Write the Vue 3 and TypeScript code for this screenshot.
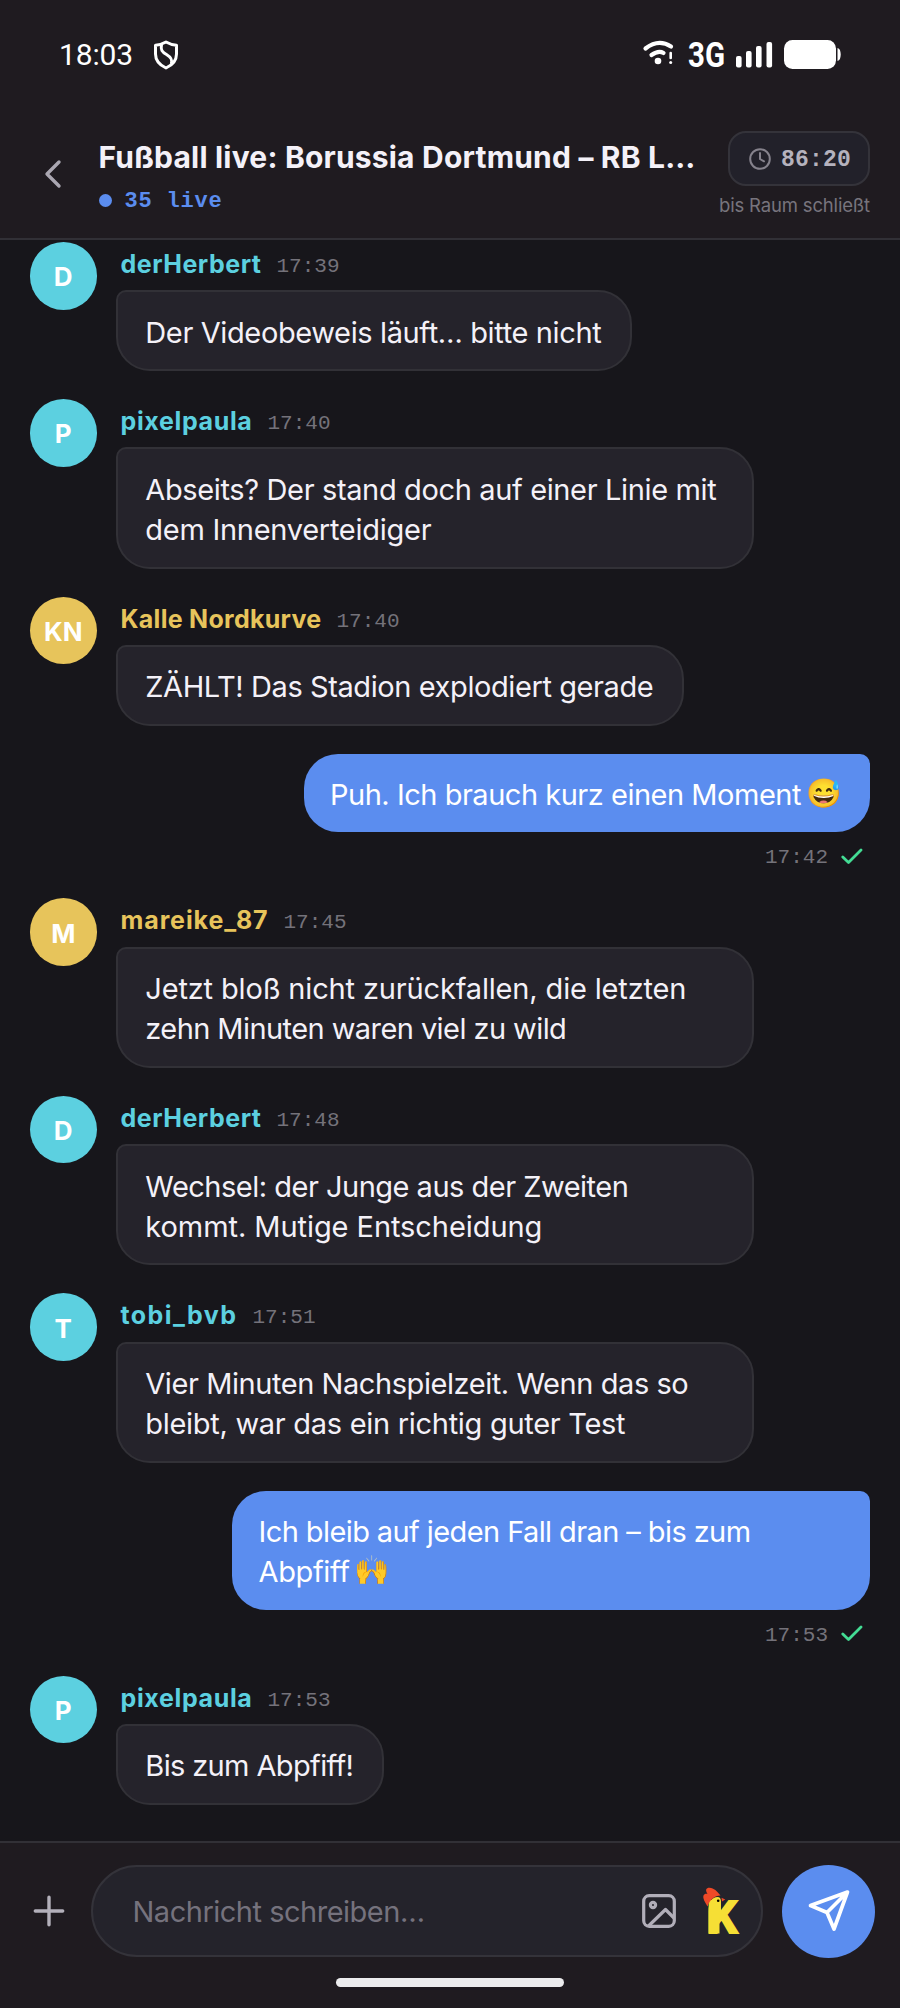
<script setup lang="ts">
import { onMounted, ref } from 'vue'

interface Line {
  text: string
  width: number
  emoji?: 'sweat' | 'hands'
}

interface Message {
  id: number
  own?: boolean
  name?: string
  nameWidth?: number
  initials?: string
  tone?: 'cyan' | 'gold'
  time: string
  lines: Line[]
}

const messages: Message[] = [
  { id: 1, name: 'derHerbert', nameWidth: 141, initials: 'D', tone: 'cyan', time: '17:39',
    lines: [{ text: 'Der Videobeweis läuft… bitte nicht', width: 456 }] },
  { id: 2, name: 'pixelpaula', nameWidth: 132, initials: 'P', tone: 'cyan', time: '17:40',
    lines: [{ text: 'Abseits? Der stand doch auf einer Linie mit', width: 571 }, { text: 'dem Innenverteidiger', width: 286 }] },
  { id: 3, name: 'Kalle Nordkurve', nameWidth: 201, initials: 'KN', tone: 'gold', time: '17:40',
    lines: [{ text: 'ZÄHLT! Das Stadion explodiert gerade', width: 508 }] },
  { id: 4, own: true, time: '17:42',
    lines: [{ text: 'Puh. Ich brauch kurz einen Moment', width: 471, emoji: 'sweat' }] },
  { id: 5, name: 'mareike_87', nameWidth: 148, initials: 'M', tone: 'gold', time: '17:45',
    lines: [{ text: 'Jetzt bloß nicht zurückfallen, die letzten', width: 541 }, { text: 'zehn Minuten waren viel zu wild', width: 421 }] },
  { id: 6, name: 'derHerbert', nameWidth: 141, initials: 'D', tone: 'cyan', time: '17:48',
    lines: [{ text: 'Wechsel: der Junge aus der Zweiten', width: 483 }, { text: 'kommt. Mutige Entscheidung', width: 397 }] },
  { id: 7, name: 'tobi_bvb', nameWidth: 117, initials: 'T', tone: 'cyan', time: '17:51',
    lines: [{ text: 'Vier Minuten Nachspielzeit. Wenn das so', width: 543 }, { text: 'bleibt, war das ein richtig guter Test', width: 480 }] },
  { id: 8, own: true, time: '17:53',
    lines: [{ text: 'Ich bleib auf jeden Fall dran – bis zum', width: 492 }, { text: 'Abpfiff', width: 91, emoji: 'hands' }] },
  { id: 9, name: 'pixelpaula', nameWidth: 132, initials: 'P', tone: 'cyan', time: '17:53',
    lines: [{ text: 'Bis zum Abpfiff!', width: 208 }] },
]

const draft = ref('')

/* Tracks a run of text so that it spans the given width. */
const vFit = {
  mounted(el: HTMLElement, binding: { value: number | undefined }) {
    if (!binding.value) return
    const natural = el.getBoundingClientRect().width
    const count = (el.textContent ?? '').trim().length
    el.style.letterSpacing = `${((binding.value - natural) / count).toFixed(3)}px`
  },
}

onMounted(() => {
  document.title = 'Fußball live'
})
</script>

<template>
  <div class="screen">
    <header class="top">
      <div class="status">
        <div class="status-left">
          <span v-fit="74" class="clock">18:03</span>
          <svg class="shield" width="26" height="30" viewBox="0 0 26 30">
            <path d="M13 2 C9.500 4 6 5 2.500 5.200 V14 C2.500 20.500 7.500 25.500 13 28 C18.500 25.500 23.500 20.500 23.500 14 V5.200 C20 5 16.500 4 13 2 Z" />
            <path d="M8.500 4.500 C7.500 10 9 12 13.500 14.500 C18.500 17.500 19.500 20 18.300 24" />
          </svg>
        </div>
        <div class="status-right">
          <svg class="signals" width="200" height="30" viewBox="0 0 200 30" fill="#fff">
            <g fill="none" stroke="#fff" stroke-linecap="round">
              <path d="M3.500 9.500 Q16.500 -.5 29 7.500" stroke-width="4.200" />
              <path d="M9.500 16 Q16.500 11 21.500 14" stroke-width="4.200" />
              <path d="M28.700 14 V19" stroke-width="2.600" />
            </g>
            <circle cx="16" cy="22" r="3.300" />
            <circle cx="28.700" cy="23.500" r="1.500" />
            <text x="46" y="28" class="net" textLength="37" lengthAdjust="spacingAndGlyphs">3G</text>
            <rect x="94" y="17" width="5.600" height="11.500" rx="2" />
            <rect x="104" y="12" width="5.600" height="16.500" rx="2" />
            <rect x="114" y="7" width="5.600" height="21.500" rx="2" />
            <rect x="124.500" y="3" width="5.600" height="25.500" rx="2" />
            <rect x="142" y="1" width="52" height="29" rx="8.500" />
            <path d="M195.500 9 C199.800 9.300 199.800 21.700 195.500 22 Z" />
          </svg>
        </div>
      </div>
      <div class="room">
        <svg class="back" width="20" height="32" viewBox="0 0 20 32"><path d="M16 4 L4 16 L16 28" /></svg>
        <div class="room-info">
          <h1 class="title"><span v-fit="597">Fußball live: Borussia Dortmund – RB L…</span></h1>
          <div class="live"><i class="dot" /><span v-fit="98">35 live</span></div>
        </div>
        <div class="closing">
          <div class="timer">
            <svg width="22" height="22" viewBox="0 0 22 22"><circle cx="11" cy="11" r="9.800" /><path d="M11 5 V11 L15 13.300" /></svg>
            <span v-fit="70">86:20</span>
          </div>
          <span class="closing-note"><span v-fit="151">bis Raum schließt</span></span>
        </div>
      </div>
    </header>

    <main class="feed">
      <article v-for="m in messages" :key="m.id" class="message" :class="{ own: m.own }">
        <div v-if="!m.own" class="avatar" :class="m.tone">{{ m.initials }}</div>
        <div class="content">
          <div v-if="!m.own" class="meta">
            <span v-fit="m.nameWidth" class="name" :class="m.tone">{{ m.name }}</span>
            <time>{{ m.time }}</time>
          </div>
          <div class="bubble" :class="{ wide: m.lines.length > 1 }">
            <div v-for="line in m.lines" :key="line.text" class="line">
              <span v-fit="line.width">{{ line.text }}</span>
              <span v-if="line.emoji" class="emoji">{{ line.emoji === 'sweat' ? '😅' : '🙌' }}</span>
            </div>
          </div>
          <div v-if="m.own" class="receipt">
            <time>{{ m.time }}</time>
            <svg width="22" height="17" viewBox="0 0 22 17"><path d="M1.800 9 L7.500 14.500 L20 2" /></svg>
          </div>
        </div>
      </article>
    </main>

    <footer class="composer">
      <div class="compose-row">
        <svg class="plus" width="32" height="32" viewBox="0 0 32 32"><path d="M16 2.300 V29.700 M2.300 16 H29.700" /></svg>
        <div class="field">
          <div class="input">
            <span v-if="!draft" v-fit="292">Nachricht schreiben…</span>
          </div>
          <svg class="photo" width="34" height="34" viewBox="0 0 34 34">
            <rect x="1.700" y="1.700" width="30.600" height="30.600" rx="5.500" />
            <circle cx="11" cy="11" r="2.600" />
            <path d="M6.500 32 L23.500 15.500 L32 24" />
          </svg>
          <svg class="rooster" width="40" height="48" viewBox="0 0 40 48">
            <text x="3.600" y="46.500" textLength="34" lengthAdjust="spacingAndGlyphs">K</text>
            <path class="neck" d="M5.500 46.500 V25 C5.500 15 9 10 14.500 10 C17 10 18 12 18 14.500 V28 L16.500 32 V46.500 Z" />
            <path class="comb" d="M4.500 19.500 C2 15 -.5 11.500 .5 8.500 C1.300 6.800 3 6.300 4.500 7 C2 3 3 .8 6.500 .8 C11 .8 14 4.500 17.500 8.500 C11.500 8.500 7 12.500 4.500 19.500 Z" />
            <path class="comb" d="M18.500 10.800 L22.300 12.600 L19 14.500 Z" />
            <circle cx="15.200" cy="13.700" r="1.300" />
          </svg>
        </div>
        <div class="send">
          <svg width="44" height="44" viewBox="0 0 44 44"><path d="M40.500 3 L3.500 16.500 L20 23.500 L27 40 Z M20 23.500 L40.500 3" /></svg>
        </div>
      </div>
      <div class="home-bar" />
    </footer>
  </div>
</template>

<style>
html,
body {
  margin: 0;
  background: #17161b;
}
</style>

<style scoped>
* {
  box-sizing: border-box;
}
.screen {
  width: 900px;
  height: 2008px;
  display: flex;
  flex-direction: column;
  overflow: hidden;
  background: #17161b;
  color: #f4f1f8;
  font-family: Inter, "Noto Sans", sans-serif;
  white-space: nowrap;
}
svg {
  display: block;
  flex: none;
}
.top {
  height: 240px;
  flex: none;
  background: #1f1b20;
  border-bottom: 2px solid #313036;
}
.status {
  height: 110px;
  padding: 0 0 0 59px;
  display: flex;
  justify-content: space-between;
}
.status-left {
  display: flex;
  padding-top: 35px;
}
.clock {
  font: 400 30px/40px Roboto, sans-serif;
  color: #fff;
  width: max-content;
}
.shield {
  margin: 5px 0 0 19.500px;
  fill: none;
  stroke: #fff;
  stroke-width: 3;
  stroke-linejoin: round;
}
.status-right {
  padding: 39px 58px 0 0;
}
.signals,
.rooster {
  overflow: visible;
}
.net {
  font: 700 34.500px Roboto, sans-serif;
}
.room {
  display: flex;
  padding: 20px 30px 0 43px;
}
.back {
  margin: 28px 0 0;
  fill: none;
  stroke: #aaa7b1;
  stroke-width: 3.400;
  stroke-linecap: round;
  stroke-linejoin: round;
}
.room-info {
  margin-left: 35.500px;
  flex: 1;
}
.title {
  margin: 7px 0 0;
  font-size: 30px;
  font-weight: 700;
  line-height: 40px;
}
.live {
  display: flex;
  align-items: center;
  margin-top: 6px;
  gap: 13px;
  color: #5b8def;
  font: 700 22px/32px "Liberation Mono", monospace;
}
.live span {
  padding-top: 3px;
}
.dot {
  width: 13px;
  height: 13px;
  border-radius: 50%;
  background: #5b8def;
}
.closing {
  display: flex;
  flex-direction: column;
  align-items: flex-end;
}
.timer {
  margin-top: 1px;
  width: 142px;
  height: 55px;
  display: flex;
  align-items: center;
  gap: 10px;
  padding: 0 0 0 19px;
  background: #22212a;
  border: 2px solid #34333a;
  border-radius: 18px;
  color: #b5b2bd;
  font: 700 23px/30px "Liberation Mono", monospace;
}
.timer span {
  padding-top: 2px;
}
.timer svg {
  fill: none;
  stroke: #85828c;
  stroke-width: 2;
  stroke-linecap: round;
}
.closing-note {
  margin-top: 5px;
  font-size: 18.500px;
  line-height: 28px;
  color: #77747d;
}
.feed {
  flex: 1;
  padding: 2px 30px 0 29.500px;
  display: flex;
  flex-direction: column;
  gap: 28px;
}
.message {
  display: flex;
  gap: 19px;
}
.message.own {
  justify-content: flex-end;
}
.avatar {
  width: 67.500px;
  height: 67.500px;
  flex: none;
  border-radius: 50%;
  display: flex;
  align-items: center;
  justify-content: center;
  padding-top: 2px;
  color: #fff;
  font-weight: 700;
  font-size: 26px;
}
.avatar.cyan {
  background: #5cd0e0;
}
.avatar.gold {
  background: #e7c45b;
}
.content {
  display: flex;
  flex-direction: column;
  align-items: flex-start;
}
.own .content {
  align-items: flex-end;
}
.meta {
  height: 48.300px;
  display: flex;
  align-items: baseline;
  gap: 15px;
  padding: 5px 0 0 4.500px;
}
.name {
  font-size: 25px;
  font-weight: 700;
  line-height: 34px;
}
.name.cyan {
  color: #5cd0e0;
}
.name.gold {
  color: #e7c45b;
}
time {
  font: 400 21px/28px "Liberation Mono", monospace;
  color: #74727a;
}
.meta time {
  margin-bottom: 1px;
  transform: translateY(-1px);
}
.bubble {
  padding: 18.300px 29px 18.300px 27.300px;
  background: #25232b;
  border: 2px solid #323137;
  border-radius: 10px 34px 34px 34px;
}
.bubble.wide {
  width: 638px;
}
.own .bubble {
  padding: 19px 27px 19px 26.500px;
  border: 0;
  border-radius: 34px 10px 34px 34px;
  background: #5b8def;
  color: #fff;
}
.line {
  height: 40.300px;
  font-size: 29px;
  line-height: 44px;
  display: flex;
}
.emoji {
  margin-left: 5px;
  width: 37px;
  font: 28.500px/41px "Noto Color Emoji", sans-serif;
}
.receipt {
  height: 38.300px;
  padding: 10px 7px 0 0;
  display: flex;
  align-items: center;
  gap: 13px;
}
.receipt time {
  padding-top: 4px;
}
.receipt svg {
  fill: none;
  stroke: #43dc94;
  stroke-width: 2.800;
  stroke-linecap: round;
  stroke-linejoin: round;
}
.composer {
  height: 167px;
  flex: none;
  padding: 21.500px 25px 0 32.500px;
  background: #1f1b20;
  border-top: 2px solid #313036;
}
.compose-row {
  display: flex;
  align-items: center;
}
.plus {
  fill: none;
  stroke: #b3b0ba;
  stroke-width: 3.400;
  stroke-linecap: round;
}
.field {
  margin-left: 26.500px;
  width: 672px;
  height: 92.500px;
  display: flex;
  align-items: center;
  padding: 0 18px 0 39.500px;
  background: #24232b;
  border: 2px solid #34333a;
  border-radius: 47px;
}
.input {
  flex: 1;
  font-size: 29px;
  line-height: 42px;
  padding-top: 2px;
  color: #75727d;
}
.photo {
  fill: none;
  stroke: #b1aeb9;
  stroke-width: 3.200;
  stroke-linejoin: round;
  margin-right: 27px;
}
.rooster text {
  font: 900 46.500px Inter, sans-serif;
  fill: #f6df35;
}
.neck {
  fill: #f6df35;
}
.comb {
  fill: #ee4927;
}
.send {
  margin-left: 19px;
  width: 93px;
  height: 93px;
  border-radius: 50%;
  background: #5b8def;
  display: flex;
  align-items: center;
  justify-content: center;
}
.send svg {
  fill: none;
  stroke: #fff;
  stroke-width: 3.700;
  stroke-linejoin: round;
}
.home-bar {
  width: 228px;
  height: 9px;
  margin: 20px 0 0 303.500px;
  border-radius: 5px;
  background: #ececee;
}
</style>
